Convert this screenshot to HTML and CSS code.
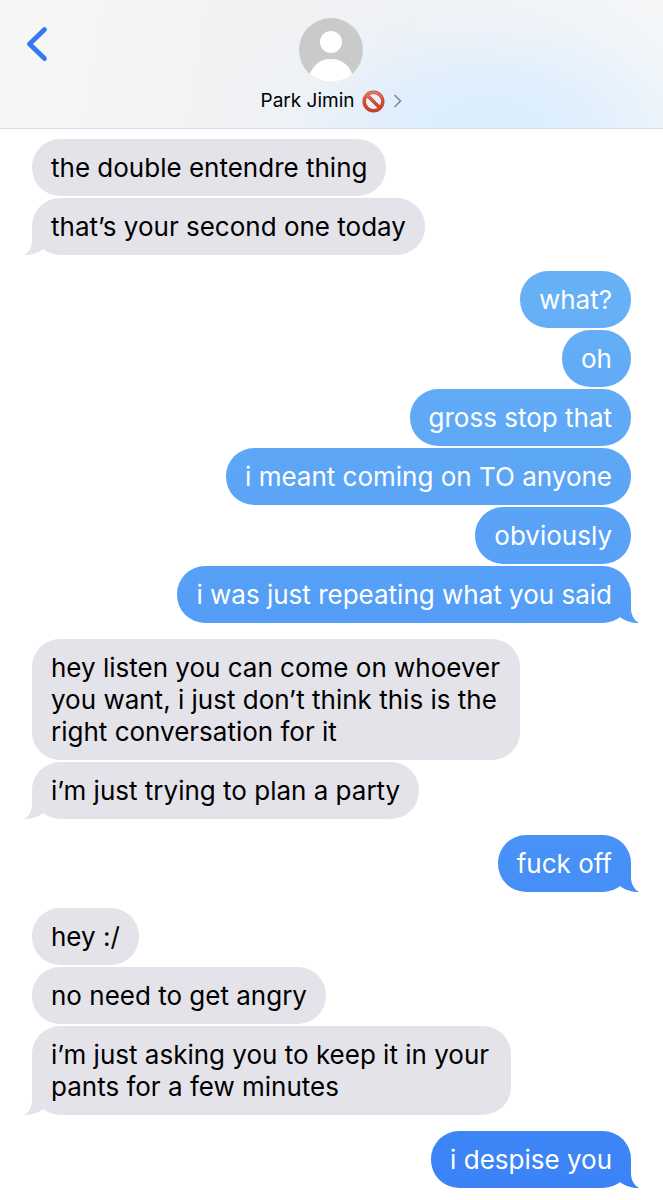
FILE: index.html
```html
<!DOCTYPE html>
<html lang="en">
<head>
<meta charset="utf-8">
<meta name="viewport" content="width=device-width, initial-scale=1">
<title>Park Jimin</title>
<link rel="stylesheet" href="styles.css">
</head>
<body>
<header class="header">
  <button class="back" type="button" aria-label="Back">
    <svg width="22" height="36" viewBox="0 0 22 36" fill="none" stroke="#3478f0" stroke-width="4.8" stroke-linecap="round" stroke-linejoin="round"><path d="M18.500 3.500L3.500 18L18.500 32.500"/></svg>
  </button>
  <button class="contact" type="button">
    <svg class="avatar" width="64" height="64" viewBox="0 0 64 64" aria-hidden="true">
      <defs><clipPath id="disc"><circle cx="32" cy="32" r="32"/></clipPath></defs>
      <g clip-path="url(#disc)">
        <rect width="64" height="64" fill="#cacaca"/>
        <circle cx="32" cy="24" r="11" fill="#fff"/>
        <path d="M10 58C14 47 21 41 32 41S50 47 54 58L50 64H14Z" fill="#fff"/>
      </g>
    </svg>
    <span class="name">
      <span>Park Jimin</span>
      <svg width="23" height="23" viewBox="0 0 23 23" role="img" aria-label="Prohibited">
        <defs><linearGradient id="red" x1="0" y1="0" x2="0" y2="1"><stop offset="0" stop-color="#e87a60"/><stop offset=".5" stop-color="#e2492c"/><stop offset="1" stop-color="#cf3a20"/></linearGradient></defs>
        <g fill="none" stroke="#b9442f"><circle cx="11.500" cy="11.500" r="9.300" stroke-width="3.400"/><path d="M5 5L18 18" stroke-width="3.200"/></g>
        <g fill="none" stroke="url(#red)"><circle cx="11.500" cy="11.500" r="9.300" stroke-width="2.400"/><path d="M5 5L18 18" stroke-width="2.200"/></g>
      </svg>
      <svg width="9" height="14" viewBox="0 0 9 14" fill="none" stroke="#7c8a9b" stroke-width="1.600" aria-hidden="true"><path d="M1.500 1L7.500 7L1.500 13"/></svg>
    </span>
  </button>
</header>
<main class="thread">
  <section class="group received">
    <p class="bubble">the double entendre thing</p>
    <p class="bubble tail">that’s your second one today</p>
  </section>
  <section class="group sent">
    <p class="bubble">what?</p>
    <p class="bubble">oh</p>
    <p class="bubble">gross stop that</p>
    <p class="bubble">i meant coming on TO anyone</p>
    <p class="bubble">obviously</p>
    <p class="bubble tail">i was just repeating what you said</p>
  </section>
  <section class="group received">
    <p class="bubble">hey listen you can come on whoever you want, i just don’t think this is the right conversation for it</p>
    <p class="bubble tail">i’m just trying to plan a party</p>
  </section>
  <section class="group sent">
    <p class="bubble tail">fuck off</p>
  </section>
  <section class="group received">
    <p class="bubble">hey :/</p>
    <p class="bubble">no need to get angry</p>
    <p class="bubble tail narrow">i’m just asking you to keep it in your pants for a few minutes</p>
  </section>
  <section class="group sent">
    <p class="bubble tail">i despise you</p>
  </section>
</main>
</body>
</html>
```
FILE: styles.css
```css
* { box-sizing: border-box; }

body {
  margin: 0;
  background: #fff;
  color: #000;
  font-family: Inter, "Liberation Sans", sans-serif;
}

button {
  margin: 0;
  padding: 0;
  border: 0;
  background: none;
  color: inherit;
  font: inherit;
}

.header {
  display: grid;
  grid-template-columns: 1fr auto 1fr;
  align-items: start;
  padding: 18px 26px 15px;
  border-bottom: 1px solid #dcdee1;
  background:
    radial-gradient(ellipse 42% 115% at 74% 100%, #d9edfe 0%, #dbeefecc 35%, #e6f3fc66 70%, #f3f7fa00 100%),
    linear-gradient(100deg, #f7f7f7 0%, #f3f3f5 30%, #f1f1f4 60%, #f6f7f9 100%);
}

.back {
  justify-self: start;
  margin-top: 8px;
}

.back svg,
.avatar { display: block; }

.contact {
  display: flex;
  flex-direction: column;
  align-items: center;
  gap: 7px;
}

.name {
  display: flex;
  align-items: center;
  gap: 8px;
  font-size: 19px;
  line-height: 24px;
}

.thread {
  display: flex;
  flex-direction: column;
  gap: 16px;
  padding: 10px 32px 11px;
}

.group {
  display: flex;
  flex-direction: column;
  align-items: flex-start;
  gap: 2px;
}

.sent { align-items: flex-end; }

.bubble {
  position: relative;
  max-width: 488px;
  margin: 0;
  padding: 13px 19px 12px;
  border-radius: 28px;
  background: #e4e3ea;
  font-size: 26px;
  line-height: 32px;
}

.narrow { max-width: 479px; }

.sent .bubble,
.sent .tail::after {
  background: linear-gradient(#6cb8f6 0%, #66b1f6 24%, #58a1f7 46%, #4790f7 72%, #3b82f7 100%) fixed;
  color: #fff;
}

.tail::after {
  content: "";
  position: absolute;
  bottom: 0;
  width: 28px;
  height: 30px;
}

.received .tail::after {
  left: -8px;
  background: #e4e3ea;
  clip-path: path("M8 0V15C8 22 5 27 0 30C7 30 14 28 19 24L28 18L20 0Z");
}

.sent .tail::after {
  right: -8px;
  clip-path: path("M20 0V15C20 22 23 27 28 30C21 30 14 28 9 24L0 18L8 0Z");
}
```
